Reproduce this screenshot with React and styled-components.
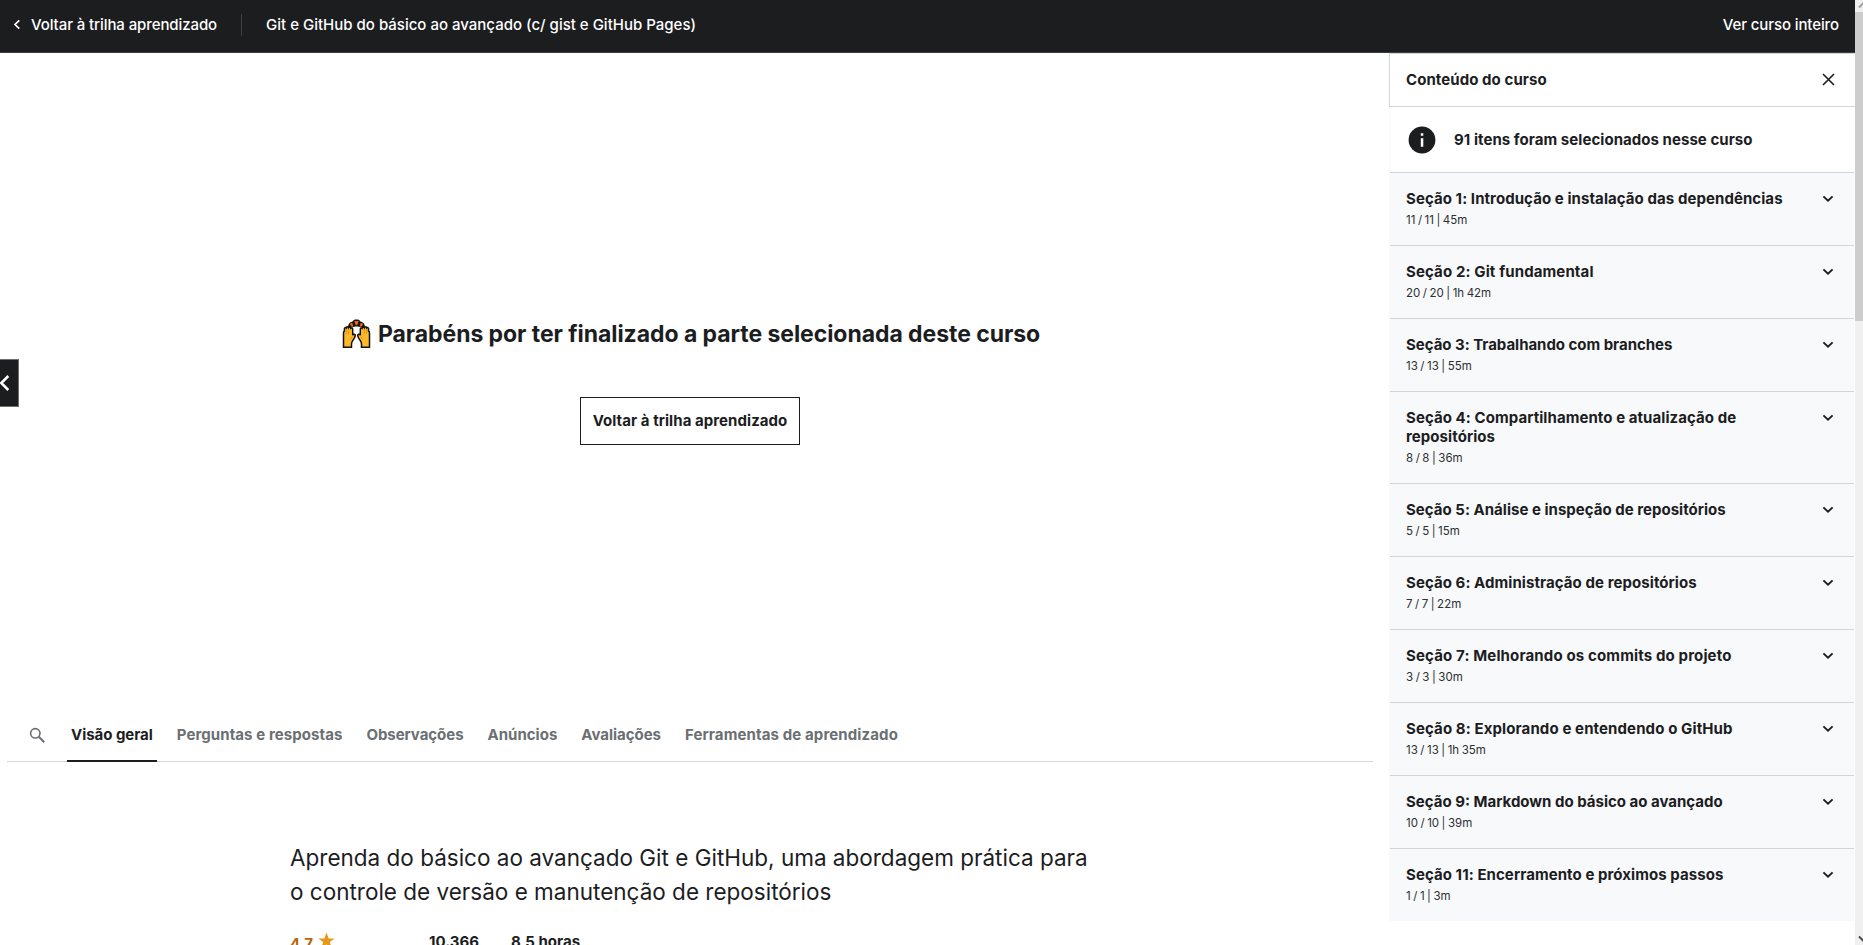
import React from 'react';
import styled, { createGlobalStyle } from 'styled-components';

const ink = '#1c1d1f';
const line = '#d1d5de';

const GlobalStyle = createGlobalStyle`
  *, *::before, *::after { box-sizing: border-box; }
  html, body { margin: 0; overflow: hidden; }
  body {
    font-family: Inter, "Liberation Sans", sans-serif;
    font-size: 15px;
    color: ${ink};
    background: #fff;
  }
  button { font: inherit; color: inherit; background: none; border: 0; padding: 0; margin: 0; }
  svg { display: block; flex: none; }
`;

const Page = styled.div`
  display: flex;
  width: 1863px;
  height: 945px;
  overflow: hidden;
`;

const Course = styled.div`
  display: flex;
  flex-direction: column;
  width: 1855px;
  flex: none;
`;

const Label = styled.span`
  letter-spacing: ${(p) => p.$track || 0}px;
  white-space: nowrap;
`;

const Header = styled.header`
  display: flex;
  align-items: center;
  height: 53px;
  flex: none;
  padding: 0 16px 3px 13px;
  background: ${ink};
  border-bottom: 1px solid #3e3d43;
  color: #fff;
  font-weight: 500;
`;

const BackLink = styled.button`
  display: flex;
  align-items: center;
  gap: 10px;
`;

const Divider = styled.span`
  width: 1px;
  height: 22px;
  margin: 0 24px 0 24px;
  background: #3e4143;
`;

const HeaderAction = styled.button`
  margin-left: auto;
`;

const Body = styled.div`
  display: flex;
  flex: 1;
  min-height: 0;
`;

const Main = styled.main`
  position: relative;
  width: 1389px;
  flex: none;
  overflow: hidden;
`;

const Stage = styled.section`
  display: flex;
  flex-direction: column;
  align-items: center;
  height: 656px;
  padding: 266px 8px 0 0;
`;

const Congrats = styled.h1`
  display: flex;
  align-items: center;
  gap: 7px;
  margin: 0 0 0 1px;
  height: 30px;
  font-size: 23px;
  font-weight: 700;
`;

const OutlineButton = styled.button`
  width: 220px;
  height: 48px;
  margin: 48px 1px 0 0;
  padding-bottom: 2px;
  border: 1px solid ${ink};
  font-weight: 700;
`;

const PrevTab = styled.button`
  position: absolute;
  left: 0;
  top: 306px;
  width: 19px;
  height: 48px;
  display: flex;
  align-items: center;
  background: ${ink};
  border: 1px solid #6a6f73;
  border-left: 0;
`;

const Tabs = styled.nav`
  display: flex;
  gap: 16px;
  height: 53px;
  margin: 0 16px 0 7px;
  padding-left: 20px;
  border-bottom: 1px solid ${line};
`;

const SearchTab = styled.button`
  display: flex;
  align-items: center;
  width: 24px;
  padding: 0 0 1px 0.5px;
`;

const Tab = styled.button`
  height: 53px;
  padding: 0 4px 0 4px;
  font-weight: 700;
  color: ${(p) => (p.$active ? ink : '#6a6f73')};
  border-bottom: 2px solid ${(p) => (p.$active ? ink : 'transparent')};
`;

const Overview = styled.section`
  padding: 79px 0 0 290px;
`;

const Headline = styled.p`
  margin: 0;
  width: 830px;
  font-size: 22.5px;
  line-height: 34px;
`;

const Stats = styled.div`
  display: flex;
  margin-top: 23px;
  line-height: 20px;
  font-weight: 700;
`;

const Rating = styled.div`
  display: flex;
  gap: 6px;
  width: 139px;
  color: #b4690e;
`;

const RatingValue = styled.span`
  width: 22px;
  padding-top: 2px;
`;

const Stat = styled.div`
  width: 82px;
  white-space: nowrap;
`;

const Sidebar = styled.aside`
  width: 466px;
  flex: none;
  font-weight: 700;
`;

const SidebarHeader = styled.div`
  display: flex;
  align-items: center;
  justify-content: space-between;
  height: 54px;
  padding: 0 20px 1px 16px;
  border: 1px solid ${line};
  border-right: 0;
`;

const Notice = styled.div`
  display: flex;
  align-items: center;
  gap: 18px;
  height: 65px;
  padding-left: 18px;
  border-left: 1px solid #f7f9fb;
`;

const SectionList = styled.div`
  width: 465px;
  background: #f8f9fb;
  padding-left: 1px;
`;

const SectionRow = styled.div`
  display: flex;
  justify-content: space-between;
  align-items: flex-start;
  padding: 16px 20px 16px 16px;
  border-top: 1px solid ${line};
  line-height: 19px;
`;

const SectionTitle = styled.div`
  white-space: pre-line;
  letter-spacing: ${(p) => p.$track}px;
`;

const SectionMeta = styled.div`
  padding-top: 4px;
  font-size: 11.5px;
  line-height: 17px;
  font-weight: 400;
  word-spacing: -0.7px;
  color: #2d2f31;
`;

const Scrollbar = styled.div`
  display: flex;
  flex-direction: column;
  width: 8px;
  flex: none;
  overflow: hidden;
  background: #f0f0f0;
`;

const Thumb = styled.div`
  height: 309px;
  background: #cdcdcd;
`;

const ScrollArrow = styled.svg`
  margin-top: ${(p) => (p.$end ? 'auto' : 0)};
`;

const Chevron = () => (
  <svg width="12" height="19" viewBox="0 0 12 19" fill="none" stroke={ink} strokeWidth="1.9">
    <path d="M1.4 7.4 6 11.8l4.6-4.4" />
  </svg>
);

const RaisedHands = () => (
  <svg width="29" height="30" viewBox="0 0 29 30">
    <path d="M1.500 28.300V14c0-1.600.6-2 .9-2V9.800c0-1.300 1.300-1.500 1.800-.9.200-1.600 2-1.600 2.300-.2.600-1.200 2.200-.8 2.300.6 1-.6 1.900 0 1.900 1.200v5.700c.8-1.500 2.800-1.200 2.600.4-.3 2-1.600 3.700-2.900 5.500-.7 1-.9 2-.9 3.200v3z" fill="#fdb92b" stroke="#111" strokeWidth="1.500" />
    <path d="M27.500 28.300V14c0-1.600-.6-2-.9-2V9.800c0-1.300-1.300-1.500-1.800-.9-.2-1.600-2-1.600-2.300-.2-.6-1.200-2.200-.8-2.300.6-1-.6-1.900 0-1.900 1.200v5.700c-.8-1.500-2.800-1.200-2.600.4.300 2 1.600 3.700 2.900 5.500.7 1 .9 2 .9 3.200v3z" fill="#fdb92b" stroke="#111" strokeWidth="1.500" />
    <path d="M4.400 10v5M6.600 10v5M22.400 10v5M24.600 10v5M10.400 17l-2 3.500M18.600 17l2 3.500" stroke="#d98a12" strokeWidth=".7" fill="none" />
    <path d="M6 8C6.300 5 7.500 3.200 10.500 2.600 11.500.8 13 .6 14.500.6s3 .2 4 2C21.500 3.200 22.700 5 23 8l-4.500.6C17.500 7.600 16 7.400 14.500 7.400s-3 .2-4 1.200z" fill="#111" />
    <path d="m7.800 4.800 2.400-1 1.300 4-2.200-.4zM12.300 2h4.400l-1.500 4.300h-1.400zM21.200 4.800l-2.400-1-1.300 4 2.200-.4z" fill="#f7630c" />
  </svg>
);

const sections = [
  { title: 'Seção 1: Introdução e instalação das dependências', meta: '11 / 11 | 45m', track: 0.07 },
  { title: 'Seção 2: Git fundamental', meta: '20 / 20 | 1h 42m', track: 0.12 },
  { title: 'Seção 3: Trabalhando com branches', meta: '13 / 13 | 55m', track: -0.03 },
  { title: 'Seção 4: Compartilhamento e atualização de\nrepositórios', meta: '8 / 8 | 36m', track: 0.07 },
  { title: 'Seção 5: Análise e inspeção de repositórios', meta: '5 / 5 | 15m', track: 0.02 },
  { title: 'Seção 6: Administração de repositórios', meta: '7 / 7 | 22m', track: 0.07 },
  { title: 'Seção 7: Melhorando os commits do projeto', meta: '3 / 3 | 30m', track: 0.14 },
  { title: 'Seção 8: Explorando e entendendo o GitHub', meta: '13 / 13 | 1h 35m', track: 0.11 },
  { title: 'Seção 9: Markdown do básico ao avançado', meta: '10 / 10 | 39m', track: 0 },
  { title: 'Seção 11: Encerramento e próximos passos', meta: '1 / 1 | 3m', track: 0.07 },
];

const tabs = [
  { label: 'Visão geral', track: -0.04, active: true },
  { label: 'Perguntas e respostas', track: 0.08 },
  { label: 'Observações', track: -0.05 },
  { label: 'Anúncios', track: 0.02 },
  { label: 'Avaliações', track: -0.04 },
  { label: 'Ferramentas de aprendizado', track: 0.12 },
];

export default function App() {
  return (
    <Page>
      <GlobalStyle />
      <Course>
        <Header>
          <BackLink>
            <svg width="8" height="12" viewBox="0 0 8 12" fill="none" stroke="#fff" strokeWidth="1.7">
              <path d="M6.300 1.300 2 5.500l4.300 4.200" />
            </svg>
            <Label $track={-0.09}>Voltar à trilha aprendizado</Label>
          </BackLink>
          <Divider />
          <Label>Git e GitHub do básico ao avançado (c/ gist e GitHub Pages)</Label>
          <HeaderAction>
            <Label $track={-0.1}>Ver curso inteiro</Label>
          </HeaderAction>
        </Header>
        <Body>
          <Main>
            <Stage>
              <Congrats>
                <RaisedHands />
                <Label $track={-0.06}>Parabéns por ter finalizado a parte selecionada deste curso</Label>
              </Congrats>
              <OutlineButton>
                <Label $track={0.06}>Voltar à trilha aprendizado</Label>
              </OutlineButton>
            </Stage>
            <PrevTab>
              <svg width="10" height="18" viewBox="0 0 10 18" fill="none" stroke="#fff" strokeWidth="2.500">
                <path d="M8.300 2 1.300 9l7 7" />
              </svg>
            </PrevTab>
            <Tabs>
              <SearchTab>
                <svg width="18" height="18" viewBox="0 0 18 18" fill="none" stroke="#6a6f73">
                  <circle cx="7.300" cy="7.300" r="4.700" strokeWidth="1.600" />
                  <path d="m10.800 10.800 5.400 5.400" strokeWidth="2" />
                </svg>
              </SearchTab>
              {tabs.map((t) => (
                <Tab key={t.label} $active={t.active}>
                  <Label $track={t.track}>{t.label}</Label>
                </Tab>
              ))}
            </Tabs>
            <Overview>
              <Headline>
                Aprenda do básico ao avançado Git e GitHub, uma abordagem prática para
                <br />o controle de versão e manutenção de repositórios
              </Headline>
              <Stats>
                <Rating>
                  <RatingValue>4,7</RatingValue>
                  <svg width="17" height="17" viewBox="0 0 24 24" fill="#e59819">
                    <path d="M12 .8 15 9h8.500l-6.800 5.200 2.500 8.300L12 17.500l-7.200 5 2.500-8.300L.5 9H9z" />
                  </svg>
                </Rating>
                <Stat>10.366</Stat>
                <Stat>8,5 horas</Stat>
              </Stats>
            </Overview>
          </Main>
          <Sidebar>
            <SidebarHeader>
              <Label $track={0.07}>Conteúdo do curso</Label>
              <svg width="13" height="13" viewBox="0 0 13 13" fill="none" stroke={ink} strokeWidth="1.600">
                <path d="m1 1 11 11M12 1 1 12" />
              </svg>
            </SidebarHeader>
            <Notice>
              <svg width="28" height="28" viewBox="0 0 28 28">
                <circle cx="14" cy="14" r="13.400" fill={ink} />
                <path d="M12.800 7.200h2.500v2.500h-2.500zM12.800 12.200h2.500V20.800h-2.500z" fill="#fff" />
              </svg>
              <Label $track={0.05}>91 itens foram selecionados nesse curso</Label>
            </Notice>
            <SectionList>
              {sections.map((s) => (
                <SectionRow key={s.title}>
                  <div>
                    <SectionTitle $track={s.track}>{s.title}</SectionTitle>
                    <SectionMeta>{s.meta}</SectionMeta>
                  </div>
                  <Chevron />
                </SectionRow>
              ))}
            </SectionList>
          </Sidebar>
        </Body>
      </Course>
      <Scrollbar>
        <ScrollArrow width="8" height="12" viewBox="0 0 8 12" fill="none" stroke="#a3a3a3" strokeWidth="2">
          <path d="m4 7.500 5-5" />
        </ScrollArrow>
        <Thumb />
        <ScrollArrow $end width="8" height="12" viewBox="0 0 8 12" fill="none" stroke="#505050" strokeWidth="2">
          <path d="m4 3.500 5 5" />
        </ScrollArrow>
      </Scrollbar>
    </Page>
  );
}
